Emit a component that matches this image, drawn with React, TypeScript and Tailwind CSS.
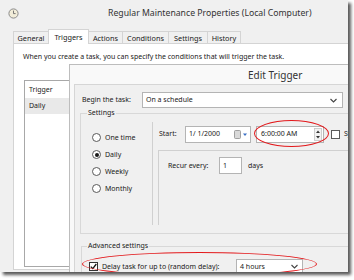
import React from "react";

function Chevron() {
  return (
    <svg width="7" height="5" viewBox="0 0 7 5">
      <path d="M0.5 1 L3.5 4 L6.5 1" fill="none" stroke="#444" strokeWidth="1.1" />
    </svg>
  );
}

function Radio({ checked }: { checked?: boolean }) {
  return (
    <span className="w-[9px] h-[9px] rounded-full border border-[#5a5a5a] bg-white flex items-center justify-center">
      {checked && <span className="w-[4px] h-[4px] rounded-full bg-[#1a1a1a]" />}
    </span>
  );
}

function Tab({ w, selected, children }: { w: string; selected?: boolean; children: React.ReactNode }) {
  return (
    <div
      className={
        selected
          ? `${w} h-[15px] -ml-px -mb-px relative z-10 bg-white border border-b-0 border-[#d4d4d4] flex items-center justify-center pb-[1px]`
          : `${w} h-[12px] -ml-px border border-b-0 border-[#d4d4d4] bg-[#f0f0f0] flex items-center justify-center`
      }
    >
      {children}
    </div>
  );
}

function RadioRow({ label, checked }: { label: string; checked?: boolean }) {
  return (
    <div className="h-[17px] flex items-center gap-[4px]">
      <Radio checked={checked} />
      <span>{label}</span>
    </div>
  );
}

export default function App() {
  return (
    <div className="w-[354px] h-[280px] bg-white font-['Noto_Sans',sans-serif] text-[#1a1a1a] text-[7px] leading-[10px] whitespace-nowrap">
      <div className="relative w-[348px] h-[272px] bg-[#f0f0f0] overflow-hidden shadow-[3px_3px_3px_rgba(0,0,0,0.65)]">
        {/* title bar */}
        <div className="h-[28px] flex items-center">
          <svg className="ml-[8px] -mt-[2px]" width="11" height="11" viewBox="0 0 11 11">
            <circle cx="5.5" cy="5.5" r="4.6" fill="#f1ecd8" stroke="#8a8a8a" strokeWidth="1" />
            <path d="M5.5 2.6 V5.6 H7.6" fill="none" stroke="#6a6a6a" strokeWidth="0.9" />
          </svg>
          <span className="ml-[89px] -mt-[2px] text-[8.7px] leading-none text-[#333]">
            Regular Maintenance Properties (Local Computer)
          </span>
        </div>

        {/* tabs */}
        <div className="h-[15px] flex items-end pl-[14px] text-[7.3px]">
          <Tab w="w-[36px]">General</Tab>
          <Tab w="w-[41px]" selected>
            Triggers
          </Tab>
          <Tab w="w-[35px]">Actions</Tab>
          <Tab w="w-[47px]">Conditions</Tab>
          <Tab w="w-[40px]">Settings</Tab>
          <Tab w="w-[34px]">History</Tab>
        </div>

        {/* tab panel */}
        <div className="ml-[13px] w-[345px] h-[227px] bg-white border border-[#d4d4d4]">
          <div className="pl-[9px] pt-[8px]">
            When you create a task, you can specify the conditions that will trigger the task.
          </div>
          <div className="ml-[10px] mt-[18px] w-[60px] h-[187px] border border-[#a8a8a8] bg-white">
            <div className="h-[17px] pl-[4px] flex items-center">Trigger</div>
            <div className="h-[16px] pl-[4px] flex items-center bg-[#e9e9e9]">Daily</div>
          </div>
        </div>

        {/* Edit Trigger dialog */}
        <div className="absolute left-[69px] top-[64px] w-[292px] h-[220px] bg-[#f9f9f9] border border-[#bdbdbd] flex flex-col">
          <div className="shrink-0 h-[19px] pl-[178px] flex items-center text-[10px] leading-none text-[#333]">Edit Trigger</div>
          <div className="flex-1 ml-[4px] bg-[#f0f0f0] border-l border-t border-[#d6d6d6]">
            {/* begin the task */}
            <div className="mt-[7px] pl-[7px] flex items-center h-[16px]">
              <span className="w-[60px]">Begin the task:</span>
              <div className="w-[201px] h-[16px] bg-white border border-[#b4b4b4] flex items-center justify-between pl-[3px] pr-[5px]">
                <span>On a schedule</span>
                <Chevron />
              </div>
            </div>

            {/* Settings */}
            <fieldset className="ml-[5px] w-[290px] border border-[#d8d8d8] pb-[8px]">
              <legend className="ml-[6px] px-[1px] leading-[10px]">Settings</legend>
              <div className="flex">
                <div className="w-[71px] pt-[11px] pl-[11px] flex flex-col">
                  <RadioRow label="One time" />
                  <RadioRow label="Daily" checked />
                  <RadioRow label="Weekly" />
                  <RadioRow label="Monthly" />
                </div>
                <div className="mt-[4px] h-[103px] flex-1 border-l border-[#d0d0d0] flex flex-col">
                  <div className="mt-[4px] pl-[6px] h-[16px] flex items-center">
                    <span className="w-[26px]">Start:</span>
                    <div className="w-[66px] h-[17px] bg-white border border-[#b4b4b4] flex items-center justify-between pl-[3px] pr-[2px]">
                      <span>1/ 1/2000</span>
                      <svg width="14" height="9" viewBox="0 0 14 9">
                        <rect x="0.5" y="0.5" width="6" height="8" rx="1" fill="#d9d9d9" stroke="#8d8d8d" strokeWidth="0.8" />
                        <path d="M9 3.5 L13 3.5 L11 6 Z" fill="#3a6fc4" />
                      </svg>
                    </div>
                    <div className="ml-[5px] w-[68px] h-[17px] bg-white border border-[#b4b4b4] flex items-center justify-between pl-[4px] pr-[1px]">
                      <span>6:00:00 AM</span>
                      <svg width="8" height="13" viewBox="0 0 8 13">
                        <rect x="0.5" y="0.5" width="7" height="12" fill="#f2f2f2" stroke="#c4c4c4" strokeWidth="0.8" />
                        <path d="M2 5 L4 2.5 L6 5 Z" fill="#333" />
                        <path d="M2 8 L4 10.5 L6 8 Z" fill="#333" />
                      </svg>
                    </div>
                    <span className="ml-[7px] w-[9px] h-[9px] bg-white border border-[#5a5a5a]" />
                    <span className="ml-[4px]">Sy</span>
                  </div>
                  <div className="mt-[8px] ml-[5px] flex-1 border-l border-t border-[#d0d0d0] pt-[6px] pl-[9px]">
                    <div className="flex items-center h-[17px]">
                      <span className="w-[51px]">Recur every:</span>
                      <div className="w-[23px] h-[17px] bg-white border border-[#b4b4b4] pl-[3px] flex items-center">1</div>
                      <span className="ml-[6px]">days</span>
                    </div>
                  </div>
                </div>
              </div>
            </fieldset>

            {/* Advanced settings */}
            <fieldset className="mt-[7px] ml-[6px] w-[290px] h-[60px] border border-[#d8d8d8]">
              <legend className="ml-[5px] px-[1px] leading-[10px]">Advanced settings</legend>
              <div className="pt-[7px] pl-[7px] flex items-center h-[24px]">
                <span className="w-[9px] h-[9px] bg-white border border-[#333] flex items-center justify-center">
                  <svg width="7" height="7" viewBox="0 0 7 7">
                    <path d="M0.8 3.6 L2.8 5.6 L6.3 1" fill="none" stroke="#111" strokeWidth="1.3" />
                  </svg>
                </span>
                <span className="ml-[4px] w-[134px]">Delay task for up to (random delay):</span>
                <div className="w-[67px] h-[16px] bg-white border border-[#b4b4b4] flex items-center justify-between pl-[3px] pr-[4px]">
                  <span>4 hours</span>
                  <Chevron />
                </div>
              </div>
            </fieldset>
          </div>
        </div>

        {/* red highlight ellipses */}
        <div className="absolute left-[254px] top-[120px] w-[75px] h-[27px] rounded-[50%] border-[1.5px] border-[#e3191c] z-20" />
        <div className="absolute left-[82px] top-[252px] w-[235px] h-[24px] rounded-[50%] border-[1.5px] border-[#e3191c] z-20" />
      </div>
    </div>
  );
}
